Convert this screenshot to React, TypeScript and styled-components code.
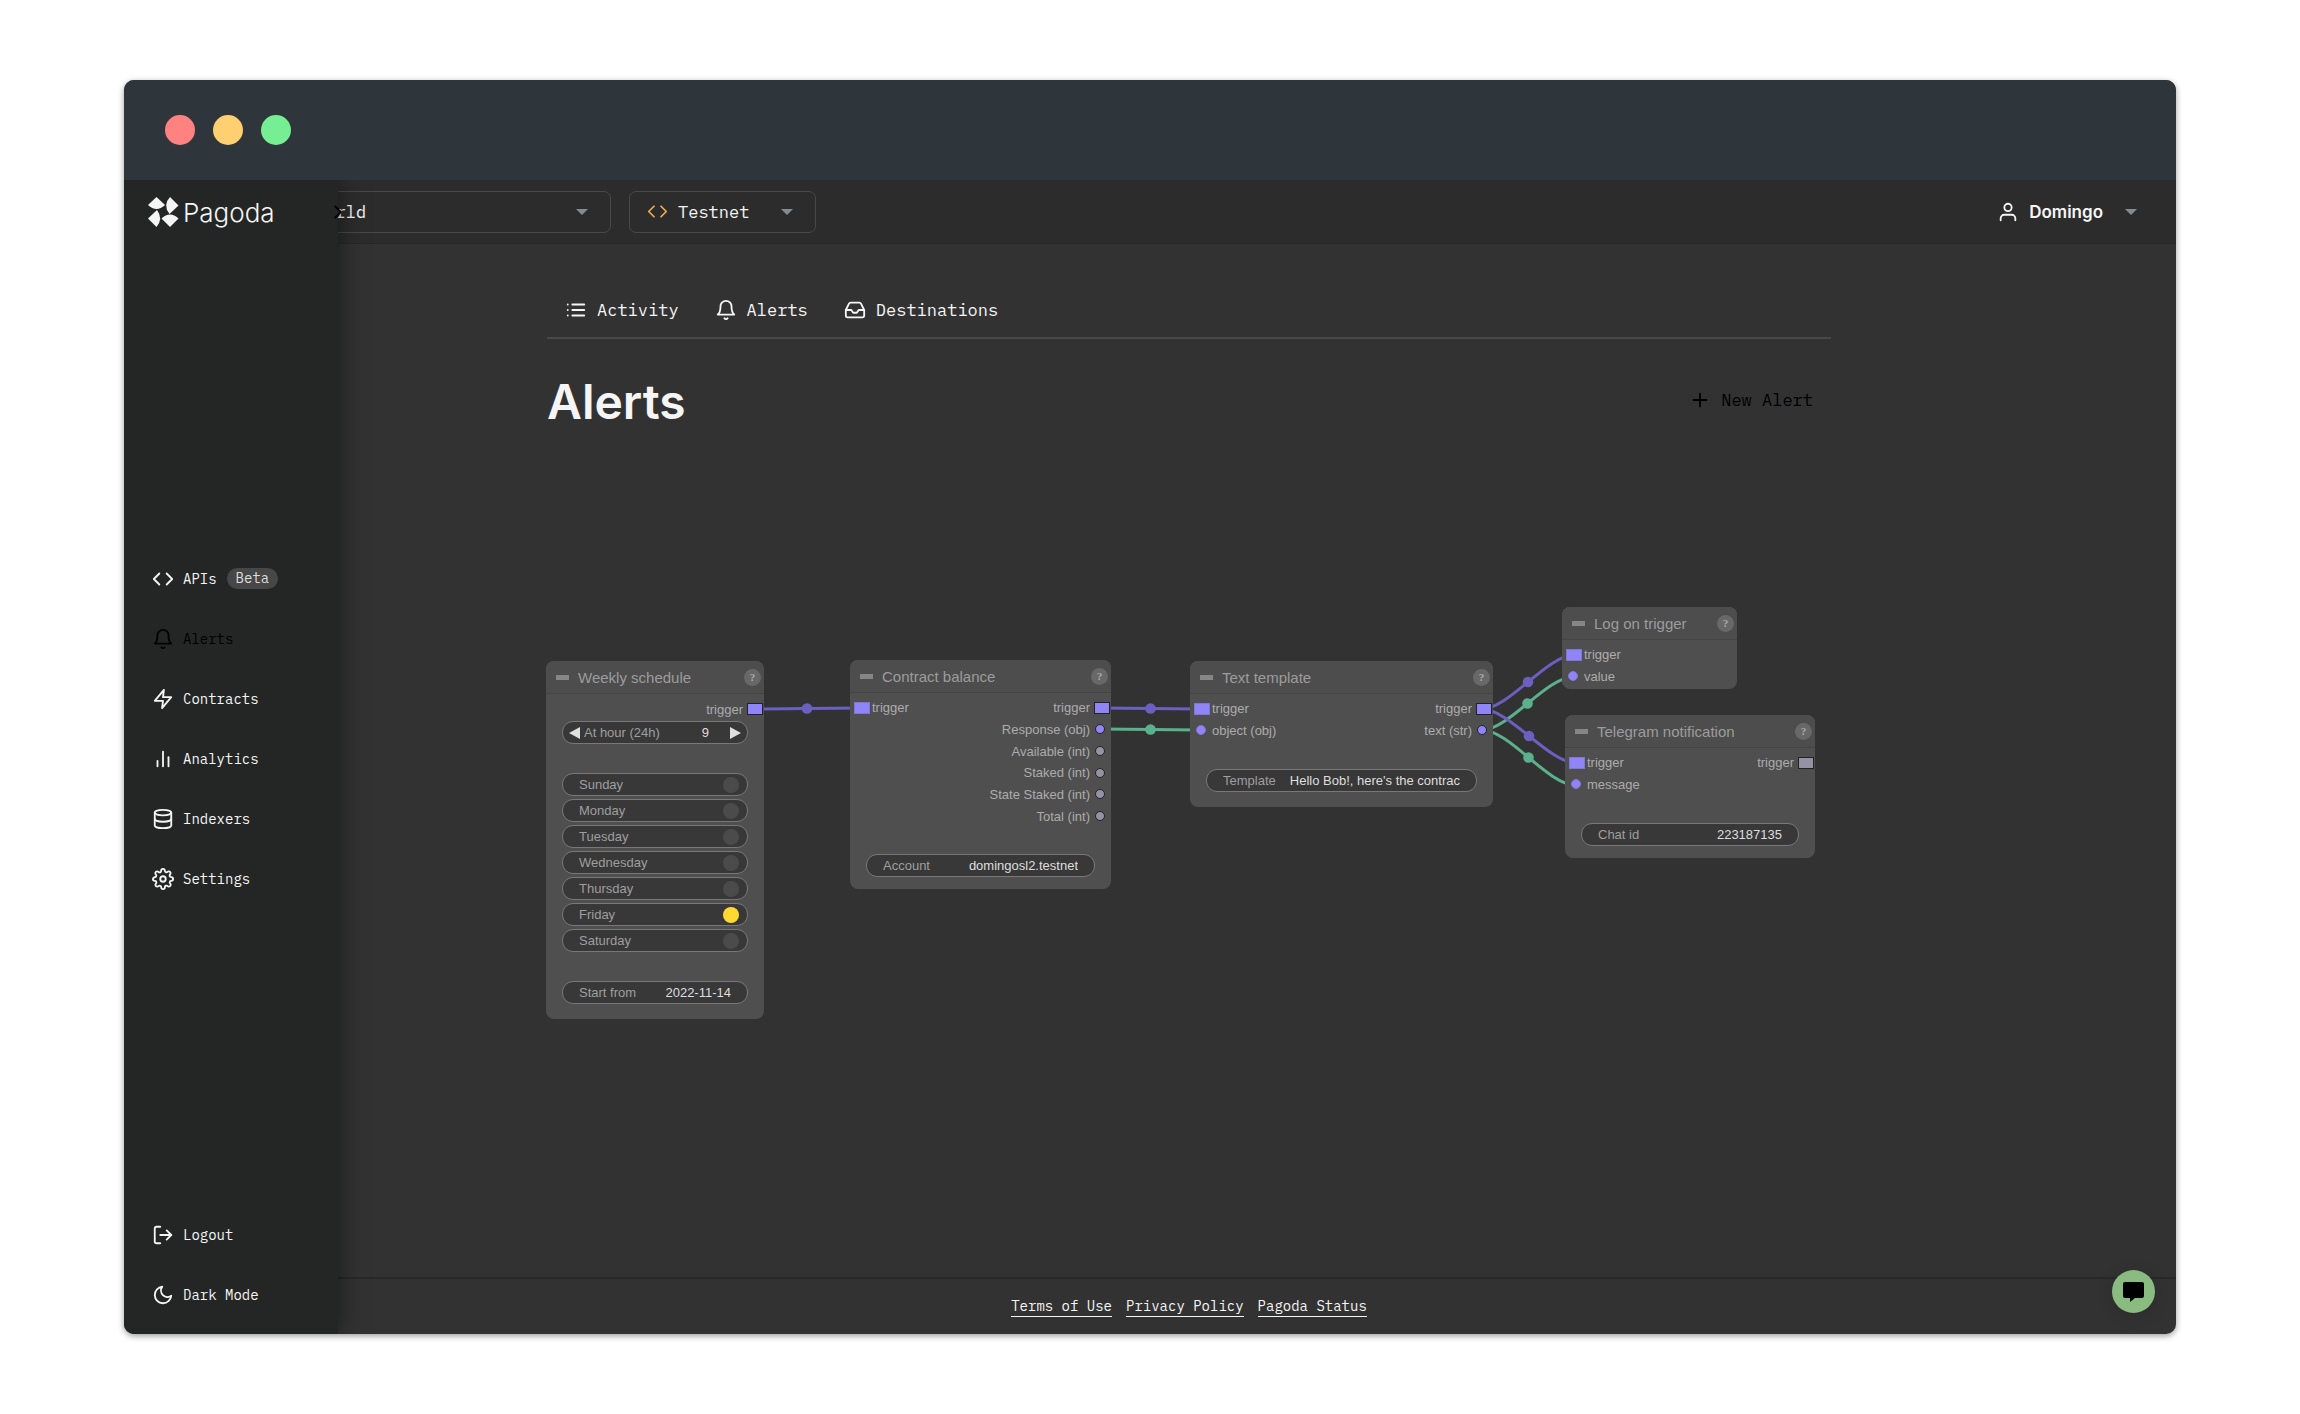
import React from "react";
import styled, { createGlobalStyle, css } from "styled-components";
import {
  FiBarChart2,
  FiBell,
  FiChevronRight,
  FiCode,
  FiDatabase,
  FiInbox,
  FiList,
  FiLogOut,
  FiMoon,
  FiPlus,
  FiSettings,
  FiUser,
  FiZap,
} from "react-icons/fi";

const mono = `"IBM Plex Mono", "Liberation Mono", monospace`;
const sans = `Inter, "Liberation Sans", sans-serif`;
const canvasFont = `"Liberation Sans", Arial, sans-serif`;

const colors = {
  titleBar: "#2e363b",
  sidebar: "#242625",
  topBar: "#2c2c2c",
  page: "#323232",
  line: "#282828",
  outline: "#484848",
  text: "#f5f5f5",
  caret: "#868a91",
  flow: "#6c5fc0",
  data: "#5bb08e",
  port: "#9085f7",
  portIdle: "#9592a4",
};

const GlobalStyle = createGlobalStyle`
  *, *::before, *::after { box-sizing: border-box; }
  body { margin: 0; background: #ffffff; }
  button, input, select { font: inherit; color: inherit; }
  button { background: none; border: 0; padding: 0; cursor: pointer; }
  a { color: inherit; text-decoration: none; }
`;

const Page = styled.div`
  display: flex;
  min-height: 100vh;
  padding: 80px 124px;
`;

const Window = styled.div`
  position: relative;
  flex: 1;
  min-width: 0;
  display: flex;
  flex-direction: column;
  border-radius: 10px;
  background: ${colors.page};
  color: ${colors.text};
  font-family: ${mono};
  box-shadow: 0 2px 6px rgba(0, 0, 0, 0.4);
`;

const TitleBar = styled.div`
  display: flex;
  align-items: center;
  gap: 18px;
  height: 100px;
  padding: 0 41px;
  border-radius: 10px 10px 0 0;
  background: ${colors.titleBar};
`;

const Light = styled.span<{ $color: string }>`
  width: 30px;
  height: 30px;
  border-radius: 50%;
  background: ${(p) => p.$color};
`;

const Body = styled.div`
  flex: 1;
  display: flex;
  overflow: hidden;
  border-radius: 0 0 10px 10px;
`;

/* The open sidebar is wider than the rail it reserves, so it covers part of the main column. */
const Sidebar = styled.aside`
  position: relative;
  z-index: 1;
  flex: none;
  display: flex;
  flex-direction: column;
  justify-content: space-between;
  width: 214px;
  margin-right: -136px;
  padding-bottom: 9px;
  background: ${colors.sidebar};
  box-shadow: 0 0 24px rgba(0, 0, 0, 0.5);
`;

const Brand = styled.a`
  display: flex;
  align-items: center;
  gap: 4px;
  height: 64px;
  margin-bottom: 8px;
  padding-left: 24px;
  font-family: ${sans};
  font-size: 26px;
  font-weight: 300;
`;

const CollapseButton = styled.button`
  position: absolute;
  top: 21px;
  right: -11px;
  display: flex;
  color: #000000;
`;

const NavItem = styled.a<{ $active?: boolean }>`
  display: flex;
  align-items: center;
  gap: 9px;
  height: 60px;
  padding-left: 28px;
  font-size: 14px;
  color: ${(p) => (p.$active ? "#000000" : colors.text)};
`;

const NavButton = styled(NavItem).attrs({ as: "button" })`
  width: 100%;
`;

const Badge = styled.span`
  margin-left: 1px;
  padding: 0 9px;
  border-radius: 11px;
  background: #474747;
  color: #dcdcdc;
  line-height: 21px;
`;

const Main = styled.div`
  flex: 1;
  min-width: 0;
  display: flex;
  flex-direction: column;
`;

const TopBar = styled.header`
  display: flex;
  align-items: center;
  gap: 18px;
  height: 64px;
  padding: 0 33px 0 18px;
  border-bottom: 1px solid ${colors.line};
  background: ${colors.topBar};
`;

const Picker = styled.label<{ $width: number }>`
  position: relative;
  display: flex;
  align-items: center;
  width: ${(p) => p.$width}px;
`;

const PickerIcon = styled.span`
  position: absolute;
  left: 18px;
  display: flex;
  color: #f0ac52;
  pointer-events: none;
`;

const PickerSelect = styled.select<{ $inset: number }>`
  appearance: none;
  width: 100%;
  height: 42px;
  padding: 0 40px 0 ${(p) => p.$inset}px;
  border: 1px solid ${colors.outline};
  border-radius: 7px;
  background: transparent;
  font-size: 17px;
`;

const caretShape = css`
  width: 0;
  border: 6px solid transparent;
  border-top-color: ${colors.caret};
  border-bottom: 0;
`;

const PickerCaret = styled.span`
  position: absolute;
  right: 23px;
  pointer-events: none;
  ${caretShape}
`;

const UserButton = styled.button`
  display: flex;
  align-items: center;
  gap: 10px;
  height: 42px;
  margin-left: auto;
  padding: 0 6px;
  font-family: ${sans};
  font-size: 17px;
  font-weight: 600;
`;

const UserCaret = styled.span`
  margin-left: 12px;
  ${caretShape}
`;

const Content = styled.main`
  flex: 1;
  width: 100%;
  max-width: 1284px;
  margin: 0 auto;
  padding-top: 39px;
`;

const Tabs = styled.nav`
  display: flex;
  border-bottom: 2px solid ${colors.outline};
`;

const Tab = styled.a`
  display: flex;
  align-items: center;
  gap: 10px;
  height: 54px;
  padding: 0 18px;
  font-size: 17px;
`;

const Heading = styled.div`
  display: flex;
  align-items: center;
  justify-content: space-between;
  height: 60px;
  margin-top: 33px;
`;

const Title = styled.h1`
  margin: 0;
  font-family: ${sans};
  font-size: 48px;
  font-weight: 600;
  line-height: 60px;
`;

const NewButton = styled.button`
  display: flex;
  align-items: center;
  gap: 10px;
  height: 42px;
  margin-bottom: 4px;
  padding: 0 18px;
  font-size: 17px;
  color: #000000;
`;

const Canvas = styled.div`
  position: relative;
  height: 600px;
  font-family: ${canvasFont};
  font-size: 13px;
`;

const Wires = styled.svg`
  position: absolute;
  top: 0;
  left: 0;
  width: 1284px;
  height: 600px;
  overflow: visible;
  fill: none;
  stroke-width: 3;
`;

const NodeCard = styled.section<{ $x: number; $y: number; $w: number; $foot: number }>`
  position: absolute;
  left: ${(p) => p.$x}px;
  top: ${(p) => p.$y}px;
  width: ${(p) => p.$w}px;
  padding-bottom: ${(p) => p.$foot}px;
  border-radius: 8px;
  background: #4f4f4f;
  color: #acacac;
`;

const NodeHeader = styled.header`
  display: flex;
  align-items: center;
  height: 33px;
  margin-bottom: 4px;
  padding: 0 3px 0 10px;
  border-bottom: 1px solid #454545;
  border-radius: 8px 8px 0 0;
  background: #4d4d4d;
`;

const Collapse = styled.button`
  width: 13px;
  height: 5px;
  margin-right: 9px;
  background: #868686;
`;

const NodeTitle = styled.h2`
  flex: 1;
  margin: 0;
  font-size: 15px;
  font-weight: 400;
  color: #9c9c9c;
`;

const Help = styled.button`
  width: 17px;
  height: 17px;
  border-radius: 50%;
  background: #686868;
  color: #adadad;
  font-family: "Liberation Serif", serif;
  font-size: 11px;
  font-weight: 700;
  line-height: 17px;
`;

const Slots = styled.div<{ $height: number }>`
  display: grid;
  grid-auto-rows: 1fr;
  height: ${(p) => p.$height}px;
`;

const SlotRow = styled.div`
  display: flex;
  justify-content: space-between;
`;

const Slot = styled.span<{ $out?: boolean }>`
  display: flex;
  align-items: center;
  gap: ${(p) => (p.$out ? 2 : 1)}px;
  padding: ${(p) => (p.$out ? "0 1px 0 0" : "0 0 0 4px")};
  flex-direction: ${(p) => (p.$out ? "row-reverse" : "row")};
`;

const PortBox = styled.span<{ $out?: boolean }>`
  display: flex;
  justify-content: ${(p) => (p.$out ? "flex-end" : "flex-start")};
  width: ${(p) => (p.$out ? 18 : 17)}px;
`;

const Port = styled.i<{ $round?: boolean; $out?: boolean; $idle?: boolean }>`
  width: ${(p) => (p.$round ? 10 : 16)}px;
  height: ${(p) => (p.$round ? 10 : 12)}px;
  margin: ${(p) => (!p.$round ? "0" : p.$out ? "0 5px 0 0" : "0 0 0 2px")};
  border: 1px solid ${(p) => (p.$out ? "#232323" : "#7f75d6")};
  border-radius: ${(p) => (p.$round ? "50%" : "0")};
  background: ${(p) => (p.$idle ? colors.portIdle : colors.port)};
`;

const Widgets = styled.div<{ $gap: number }>`
  display: flex;
  flex-direction: column;
  gap: 3px;
  padding: ${(p) => p.$gap}px 16px 0;
`;

const Widget = styled.label`
  display: flex;
  align-items: center;
  justify-content: space-between;
  height: 23px;
  padding: 0 16px;
  border: 1px solid #787878;
  border-radius: 11px;
  background: #383838;
  color: #9f9f9f;
`;

const ToggleWidget = styled(Widget)`
  padding-right: 8px;
`;

const HourWidget = styled(Widget).attrs({ as: "div" })`
  gap: 4px;
  padding: 0 6px;
`;

const Value = styled.input`
  flex: 1;
  min-width: 0;
  margin-left: 12px;
  padding: 0;
  border: 0;
  background: transparent;
  color: #dedede;
  text-align: right;
`;

const HourValue = styled(Value)`
  margin: 0 17px 0 0;
`;

const Toggle = styled.input`
  appearance: none;
  width: 16px;
  height: 16px;
  margin: 0;
  border-radius: 50%;
  background: #4b4b4b;
  &:checked {
    background: #ffd832;
  }
`;

const Step = styled.button<{ $next?: boolean }>`
  border: 6px solid transparent;
  border-width: ${(p) => (p.$next ? "6px 0 6px 11px" : "6px 11px 6px 0")};
  border-left-color: ${(p) => (p.$next ? "#e0e0e0" : "transparent")};
  border-right-color: ${(p) => (p.$next ? "transparent" : "#e0e0e0")};
`;

const Footer = styled.footer`
  display: flex;
  align-items: center;
  justify-content: center;
  gap: 14px;
  height: 57px;
  border-top: 2px solid ${colors.line};
  font-size: 14px;
`;

const FooterLink = styled.a`
  line-height: 20px;
  border-bottom: 1px solid ${colors.text};
`;

const ChatButton = styled.button`
  position: absolute;
  right: 21px;
  bottom: 21px;
  z-index: 2;
  display: flex;
  align-items: center;
  justify-content: center;
  width: 43px;
  height: 43px;
  border-radius: 50%;
  background: #8abb80;
  box-shadow: 0 2px 16px rgba(0, 0, 0, 0.15);
`;

type SlotSpec = { name: string; round?: boolean; idle?: boolean };
type NodeProps = {
  title: string;
  x: number;
  y: number;
  w: number;
  foot: number;
  slots: number;
  inputs?: SlotSpec[];
  outputs?: SlotSpec[];
  children?: React.ReactNode;
};

function SlotView({ slot, out }: { slot: SlotSpec; out?: boolean }) {
  return (
    <Slot $out={out}>
      <PortBox $out={out}>
        <Port $round={slot.round} $out={out} $idle={slot.idle} />
      </PortBox>
      {slot.name}
    </Slot>
  );
}

function GraphNode({ title, x, y, w, foot, slots, inputs = [], outputs = [], children }: NodeProps) {
  const rows = Array.from({ length: Math.max(inputs.length, outputs.length) });
  return (
    <NodeCard $x={x} $y={y} $w={w} $foot={foot}>
      <NodeHeader>
        <Collapse aria-label={`Collapse ${title}`} />
        <NodeTitle>{title}</NodeTitle>
        <Help>?</Help>
      </NodeHeader>
      <Slots $height={slots}>
        {rows.map((_, i) => (
          <SlotRow key={i}>
            {inputs[i] ? <SlotView slot={inputs[i]} /> : <span />}
            {outputs[i] && <SlotView slot={outputs[i]} out />}
          </SlotRow>
        ))}
      </Slots>
      {children}
    </NodeCard>
  );
}

type WireSpec = { from: [number, number]; to: [number, number]; color: string };

const wires: WireSpec[] = [
  { from: [206, 277], to: [314, 276], color: colors.flow },
  { from: [554, 276], to: [653, 277], color: colors.flow },
  { from: [554, 297], to: [653, 298], color: colors.data },
  { from: [935, 298], to: [1026, 245], color: colors.data },
  { from: [935, 277], to: [1027, 223], color: colors.flow },
  { from: [935, 277], to: [1029, 331], color: colors.flow },
  { from: [935, 298], to: [1028, 353], color: colors.data },
];

function Wire({ from, to, color }: WireSpec) {
  const [x1, y1] = from;
  const [x2, y2] = to;
  const pull = Math.hypot(x2 - x1, y2 - y1) / 4;
  return (
    <g stroke={color}>
      <path d={`M${x1} ${y1}C${x1 + pull} ${y1} ${x2 - pull} ${y2} ${x2} ${y2}`} />
      <circle cx={(x1 + x2) / 2} cy={(y1 + y2) / 2} r="5.3" fill={color} stroke="none" />
    </g>
  );
}

const days = ["Sunday", "Monday", "Tuesday", "Wednesday", "Thursday", "Friday", "Saturday"];

const navItems = [
  { label: "APIs", icon: FiCode, badge: "Beta" },
  { label: "Alerts", icon: FiBell, active: true },
  { label: "Contracts", icon: FiZap },
  { label: "Analytics", icon: FiBarChart2 },
  { label: "Indexers", icon: FiDatabase },
  { label: "Settings", icon: FiSettings },
];

const tabs = [
  { label: "Activity", icon: FiList },
  { label: "Alerts", icon: FiBell },
  { label: "Destinations", icon: FiInbox },
];

function PagodaMark() {
  return (
    <svg width="31" height="30" viewBox="0 0 31 30" fill={colors.text} aria-hidden="true">
      <path d="M8.5 0L17 8Q8.5 16 0 8Z" />
      <path d="M22 0L30.5 8.5L21.5 17Q14.5 8 22 0Z" />
      <path d="M9 13L0 21.5L8.5 30Q15.5 21.5 9 13Z" />
      <path d="M13.5 21.5Q22 13.5 30.5 21.5L22 30Z" />
    </svg>
  );
}

export default function App() {
  return (
    <Page>
      <GlobalStyle />
      <Window>
        <TitleBar>
          <Light $color="#ff8280" />
          <Light $color="#ffcf70" />
          <Light $color="#76ee94" />
        </TitleBar>
        <Body>
          <Sidebar>
            <Brand href="#">
              <PagodaMark />
              Pagoda
            </Brand>
            <CollapseButton aria-label="Toggle sidebar">
              <FiChevronRight size={22} />
            </CollapseButton>
            <nav>
              {navItems.map(({ label, icon: Icon, badge, active }) => (
                <NavItem key={label} href="#" $active={active}>
                  <Icon size={22} />
                  {label}
                  {badge && <Badge>{badge}</Badge>}
                </NavItem>
              ))}
            </nav>
            <div>
              <NavButton>
                <FiLogOut size={22} />
                Logout
              </NavButton>
              <NavButton>
                <FiMoon size={22} />
                Dark Mode
              </NavButton>
            </div>
          </Sidebar>
          <Main>
            <TopBar>
              <Picker $width={391}>
                <PickerSelect $inset={33} aria-label="Project">
                  <option>Hello World</option>
                </PickerSelect>
                <PickerCaret />
              </Picker>
              <Picker $width={187}>
                <PickerIcon>
                  <FiCode size={21} />
                </PickerIcon>
                <PickerSelect $inset={48} aria-label="Network">
                  <option>Testnet</option>
                </PickerSelect>
                <PickerCaret />
              </Picker>
              <UserButton>
                <FiUser size={22} />
                Domingo
                <UserCaret />
              </UserButton>
            </TopBar>
            <Content>
              <Tabs>
                {tabs.map(({ label, icon: Icon }) => (
                  <Tab key={label} href="#">
                    <Icon size={22} />
                    {label}
                  </Tab>
                ))}
              </Tabs>
              <Heading>
                <Title>Alerts</Title>
                <NewButton>
                  <FiPlus size={22} />
                  New Alert
                </NewButton>
              </Heading>
              <Canvas>
                <Wires aria-hidden="true">
                  {wires.map((wire, i) => (
                    <Wire key={i} {...wire} />
                  ))}
                </Wires>
                <GraphNode
                  title="Weekly schedule"
                  x={-1}
                  y={229}
                  w={218}
                  foot={15}
                  slots={22}
                  outputs={[{ name: "trigger" }]}
                >
                  <Widgets $gap={1}>
                    <HourWidget>
                      <Step aria-label="Earlier" />
                      <label htmlFor="hour">At hour (24h)</label>
                      <HourValue id="hour" defaultValue="9" />
                      <Step $next aria-label="Later" />
                    </HourWidget>
                  </Widgets>
                  <Widgets $gap={29}>
                    {days.map((day) => (
                      <ToggleWidget key={day}>
                        {day}
                        <Toggle type="checkbox" defaultChecked={day === "Friday"} />
                      </ToggleWidget>
                    ))}
                  </Widgets>
                  <Widgets $gap={29}>
                    <Widget>
                      Start from
                      <Value defaultValue="2022-11-14" />
                    </Widget>
                  </Widgets>
                </GraphNode>
                <GraphNode
                  title="Contract balance"
                  x={303}
                  y={228}
                  w={261}
                  foot={12}
                  slots={130}
                  inputs={[{ name: "trigger" }]}
                  outputs={[
                    { name: "trigger" },
                    { name: "Response (obj)", round: true },
                    { name: "Available (int)", round: true, idle: true },
                    { name: "Staked (int)", round: true, idle: true },
                    { name: "State Staked (int)", round: true, idle: true },
                    { name: "Total (int)", round: true, idle: true },
                  ]}
                >
                  <Widgets $gap={27}>
                    <Widget>
                      Account
                      <Value defaultValue="domingosl2.testnet" />
                    </Widget>
                  </Widgets>
                </GraphNode>
                <GraphNode
                  title="Text template"
                  x={643}
                  y={229}
                  w={303}
                  foot={15}
                  slots={43}
                  inputs={[{ name: "trigger" }, { name: "object (obj)", round: true }]}
                  outputs={[{ name: "trigger" }, { name: "text (str)", round: true }]}
                >
                  <Widgets $gap={28}>
                    <Widget>
                      Template
                      <Value defaultValue="Hello Bob!, here's the contrac" />
                    </Widget>
                  </Widgets>
                </GraphNode>
                <GraphNode
                  title="Log on trigger"
                  x={1015}
                  y={175}
                  w={175}
                  foot={2}
                  slots={43}
                  inputs={[{ name: "trigger" }, { name: "value", round: true }]}
                />
                <GraphNode
                  title="Telegram notification"
                  x={1018}
                  y={283}
                  w={250}
                  foot={12}
                  slots={43}
                  inputs={[{ name: "trigger" }, { name: "message", round: true }]}
                  outputs={[{ name: "trigger", idle: true }]}
                >
                  <Widgets $gap={28}>
                    <Widget>
                      Chat id
                      <Value defaultValue="223187135" />
                    </Widget>
                  </Widgets>
                </GraphNode>
              </Canvas>
            </Content>
            <Footer>
              <FooterLink href="#">Terms of Use</FooterLink>
              <FooterLink href="#">Privacy Policy</FooterLink>
              <FooterLink href="#">Pagoda Status</FooterLink>
            </Footer>
          </Main>
        </Body>
        <ChatButton aria-label="Open chat">
          <svg width="21" height="20" viewBox="0 0 21 20" aria-hidden="true">
            <path d="M2 0H19Q21 0 21 2V14Q21 16 19 16H12L7 20V16H2Q0 16 0 14V2Q0 0 2 0Z" />
          </svg>
        </ChatButton>
      </Window>
    </Page>
  );
}
